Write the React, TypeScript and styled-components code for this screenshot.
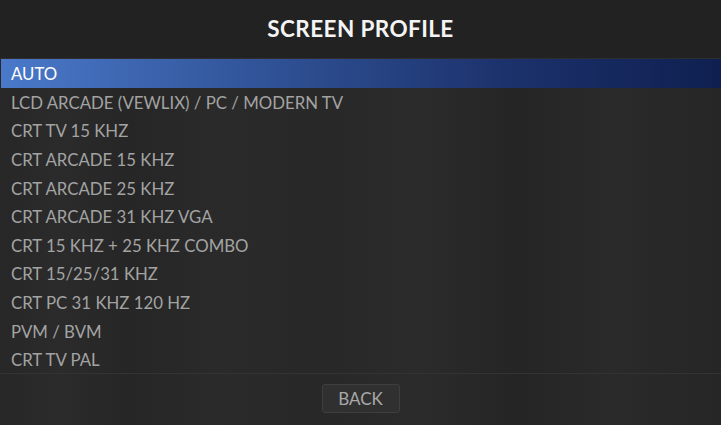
import { useState } from 'react';
import styled, { createGlobalStyle } from 'styled-components';

const GlobalStyle = createGlobalStyle`
  html, body {
    margin: 0;
    padding: 0;
    background: #262626;
  }
  * {
    box-sizing: border-box;
  }
`;

const profiles = [
  'AUTO',
  'LCD ARCADE (VEWLIX) / PC / MODERN TV',
  'CRT TV 15 KHZ',
  'CRT ARCADE 15 KHZ',
  'CRT ARCADE 25 KHZ',
  'CRT ARCADE 31 KHZ VGA',
  'CRT 15 KHZ + 25 KHZ COMBO',
  'CRT 15/25/31 KHZ',
  'CRT PC 31 KHZ 120 HZ',
  'PVM / BVM',
  'CRT TV PAL',
];

const Screen = styled.div`
  width: 721px;
  height: 425px;
  display: flex;
  flex-direction: column;
  font-family: Lato, 'Open Sans', sans-serif;
  background:
    linear-gradient(
      90deg,
      #272727 0%,
      #2b2b2b 8%,
      #262626 18%,
      #2a2a2a 30%,
      #282828 45%,
      #2b2b2b 58%,
      #252525 72%,
      #2a2a2a 85%,
      #262626 100%
    );
  overflow: hidden;
`;

const Header = styled.div`
  height: 59px;
  display: flex;
  align-items: center;
  justify-content: center;
  background: #222222;
  border-bottom: 1px solid #2e2e2e;
`;

const Title = styled.h1`
  margin: 0;
  padding-bottom: 2px;
  color: #f4f4f4;
  font-size: 22.5px;
  font-weight: 700;
  letter-spacing: 0.4px;
`;

const List = styled.ul`
  list-style: none;
  margin: 0;
  padding: 0;
  height: 315px;
  border-bottom: 1px solid #333333;
`;

const Row = styled.li<{ $active: boolean }>`
  height: 28.6px;
  display: flex;
  align-items: center;
  padding-left: 10px;
  padding-top: 1px;
  margin-left: 1px;
  font-size: 16.8px;
  color: ${(p) => (p.$active ? '#ffffff' : '#a3a3a3')};
  background: ${(p) =>
    p.$active
      ? 'linear-gradient(90deg, #4a79ca 0%, #2e4f92 40%, #1c326c 70%, #0f1f50 100%)'
      : 'transparent'};
  cursor: pointer;
`;

const Footer = styled.div`
  flex: 1;
  display: flex;
  justify-content: center;
  padding-top: 10px;
`;

const BackButton = styled.button`
  width: 78px;
  height: 29px;
  border: 1px solid #3e3e3e;
  border-radius: 3px;
  background: #303030;
  color: #a8a8a8;
  font-family: Lato, 'Open Sans', sans-serif;
  font-size: 17px;
  padding: 0;
  cursor: pointer;
`;

export default function App() {
  const [active, setActive] = useState(0);

  return (
    <>
      <GlobalStyle />
      <Screen>
        <Header>
          <Title>SCREEN PROFILE</Title>
        </Header>
        <List>
          {profiles.map((name, i) => (
            <Row key={name} $active={i === active} onClick={() => setActive(i)}>
              {name}
            </Row>
          ))}
        </List>
        <Footer>
          <BackButton>BACK</BackButton>
        </Footer>
      </Screen>
    </>
  );
}
